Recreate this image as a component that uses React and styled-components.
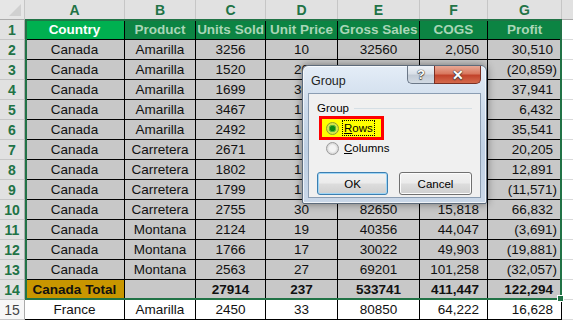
import React from "react";
import styled, { createGlobalStyle, css } from "styled-components";

// Page reset
const GlobalStyle = createGlobalStyle`
    body {
        margin: 0;
        background: #ffffff;
        overflow: hidden;
        font-family: "Liberation Sans", Arial, sans-serif;
    }
`;

// Sheet data
const columns = ["A", "B", "C", "D", "E", "F", "G"];
const headers = ["Country", "Product", "Units Sold", "Unit Price", "Gross Sales", "COGS", "Profit"];

const rows = [
    ["Canada", "Amarilla", 3256, 10, 32560, "2,050", "30,510"],
    ["Canada", "Amarilla", 1520, 20, 30400, "51,259", "(20,859)"],
    ["Canada", "Amarilla", 1699, 30, 50970, "13,029", "37,941"],
    ["Canada", "Amarilla", 3467, 15, 52005, "45,573", "6,432"],
    ["Canada", "Amarilla", 2492, 15, 37380, "1,839", "35,541"],
    ["Canada", "Carretera", 2671, 12, 32052, "11,847", "20,205"],
    ["Canada", "Carretera", 1802, 15, 27030, "14,139", "12,891"],
    ["Canada", "Carretera", 1799, 12, 21588, "33,159", "(11,571)"],
    ["Canada", "Carretera", 2755, 30, 82650, "15,818", "66,832"],
    ["Canada", "Montana", 2124, 19, 40356, "44,047", "(3,691)"],
    ["Canada", "Montana", 1766, 17, 30022, "49,903", "(19,881)"],
    ["Canada", "Montana", 2563, 27, 69201, "101,258", "(32,057)"],
];

const total = ["Canada Total", "", 27914, 237, 533741, "411,447", "122,294"];
const france = ["France", "Amarilla", 2450, 33, 80850, "64,222", "16,628"];

// Sheet styling
const Sheet = styled.div`
    position: relative;
    display: grid;
    grid-template-columns: 25px 100px 71px 70px 72px 82px 68px 74px 1fr;
    grid-auto-rows: 20px;
    width: 573px;
    height: 320px;
    overflow: hidden;
    font-size: 13.5px;
    color: #111;
`;

const Corner = styled.div`
    position: relative;
    background: #e6e6e6;
    border-right: 1px solid #c6c6c6;
    border-bottom: 1px solid #ababab;
    box-sizing: border-box;

    &::after {
        content: "";
        position: absolute;
        right: 3px;
        bottom: 3px;
        border-left: 12px solid transparent;
        border-bottom: 12px solid #d0d0d0;
    }
`;

const ColHead = styled.div`
    background: #e1e1e1;
    border-right: 1px solid #c6c6c6;
    border-bottom: 1px solid #ababab;
    box-sizing: border-box;
    color: #217346;
    font-weight: bold;
    font-size: 14px;
    display: flex;
    align-items: center;
    justify-content: center;
`;

const RowHead = styled.div`
    background: ${p => (p.$selected ? "#e1e1e1" : "#f7f7f7")};
    border-bottom: 1px solid #c6c6c6;
    border-right: 1px solid #ababab;
    box-sizing: border-box;
    color: ${p => (p.$selected ? "#217346" : "#444")};
    font-weight: ${p => (p.$selected ? "bold" : "normal")};
    font-size: 14px;
    display: flex;
    align-items: center;
    justify-content: center;
`;

const fills = {
    active: "#00b050",
    header: "#0c8443",
    data: "#c8c8c8",
    total: "#c89600",
    plain: "#ffffff",
};

const Cell = styled.div`
    background: ${p => fills[p.$fill]};
    border-right: 1px solid #000;
    border-bottom: 1px solid #000;
    box-sizing: border-box;
    display: flex;
    align-items: center;
    white-space: nowrap;
    overflow: hidden;
    justify-content: ${p => (p.$right ? "flex-end" : "center")};
    padding-right: ${p => (p.$right ? (p.$neg ? "4px" : "8px") : "0")};
    font-weight: ${p => (p.$bold ? "bold" : "normal")};
    ${p => p.$fill === "header" && css`color: #a9d6b7;`}
    ${p => p.$fill === "active" && css`color: #ffffff;`}
`;

const Blank = styled.div`
    border-bottom: 1px solid #dadada;
    background: ${p => (p.$head ? "#e1e1e1" : "#fff")};
    ${p => p.$head && css`border-bottom-color: #ababab;`}
`;

// Selection frame sits over the range A1:G14
const Selection = styled.div`
    position: absolute;
    left: 25px;
    top: 19px;
    width: 537px;
    height: 281px;
    border: 2px solid #217346;
    box-sizing: border-box;
    pointer-events: none;

    &::after {
        content: "";
        position: absolute;
        right: -4px;
        bottom: -4px;
        width: 5px;
        height: 5px;
        background: #217346;
        border: 1px solid #fff;
    }
`;

// Dialog styling
const Dialog = styled.div`
    position: absolute;
    left: 302px;
    top: 65px;
    width: 185px;
    height: 139px;
    box-sizing: border-box;
    border: 1px solid #5d6b7b;
    border-radius: 6px 6px 2px 2px;
    background: linear-gradient(180deg, #e4edf7 0%, #cddbeb 30%, #bfd0e4 60%, #c9d7e8 100%);
    box-shadow: 0 0 8px rgba(0, 0, 0, 0.45), inset 0 0 0 1px rgba(255, 255, 255, 0.7);
    display: flex;
    flex-direction: column;
    font-size: 11.5px;
    color: #000;
`;

const TitleBar = styled.div`
    height: 27px;
    display: flex;
    align-items: flex-start;
    justify-content: space-between;
    padding-left: 8px;
`;

const Title = styled.span`
    font-size: 12.5px;
    margin-top: 8px;
    color: #1e1e1e;
`;

const CaptionButtons = styled.div`
    display: flex;
    margin-right: 5px;
`;

const CaptionButton = styled.div`
    height: 18px;
    width: ${p => (p.$close ? "47px" : "27px")};
    box-sizing: border-box;
    display: flex;
    align-items: center;
    justify-content: center;
    font-weight: bold;
    font-size: ${p => (p.$close ? "14px" : "13px")};
    color: #fff;
    text-shadow: 0 0 1px #333, 0 0 1px #333, 0 1px 1px #444;
    border: 1px solid ${p => (p.$close ? "#7a3024" : "#6b7888")};
    border-top: none;
    ${p => p.$close
        ? css`
            background: linear-gradient(180deg, #e8a895 0%, #d9785f 45%, #c2432b 55%, #d46a4d 100%);
            border-radius: 0 0 5px 0;
        `
        : css`
            background: linear-gradient(180deg, #eef2f7 0%, #d9e0e8 45%, #c2cbd6 55%, #d2dae3 100%);
            border-right: none;
            border-radius: 0 0 0 5px;
        `}
`;

const Client = styled.div`
    flex: 1;
    margin: 0 5px 5px 5px;
    background: #f0f0f0;
    border: 1px solid #8b9db2;
    padding: 7px 8px 0 8px;
    display: flex;
    flex-direction: column;
`;

const GroupHeader = styled.div`
    display: flex;
    align-items: center;
    height: 14px;
    gap: 5px;

    &::after {
        content: "";
        flex: 1;
        height: 1px;
        background: #d5dfe5;
    }
`;

const Highlight = styled.div`
    margin: 1px 0 0 2px;
    width: 65px;
    height: 24px;
    box-sizing: border-box;
    border: 3px solid #ff0000;
    background: #ffff00;
    display: flex;
    align-items: center;
    padding-left: 4px;
    gap: 3px;
`;

const OptionRow = styled.div`
    display: flex;
    align-items: center;
    height: 16px;
    padding-left: 9px;
    gap: 5px;
`;

const Radio = styled.span`
    width: 11px;
    height: 11px;
    border-radius: 50%;
    border: 1px solid ${p => (p.$checked ? "#8c9c2c" : "#9a9a9a")};
    background: ${p => (p.$checked
        ? "radial-gradient(circle, #0d8a12 0 2.5px, #5ab53a 3px 3.5px, #d4e64a 4px)"
        : "radial-gradient(circle, #f4f4f4 0 3px, #dcdcdc 5px)")};
    flex-shrink: 0;
`;

const FocusLabel = styled.span`
    border: 1px dotted #000;
    padding: 0 1px;
    line-height: 14px;
`;

const Buttons = styled.div`
    display: flex;
    gap: 11px;
    margin-top: 16px;
`;

const Button = styled.div`
    width: ${p => (p.$default ? "72px" : "74px")};
    height: 23px;
    box-sizing: border-box;
    border-radius: 3px;
    border: 1px solid ${p => (p.$default ? "#3c7fb1" : "#707070")};
    background: linear-gradient(180deg, #f2f2f2 0%, #ebebeb 48%, #dddddd 52%, #cfcfcf 100%);
    box-shadow: ${p => (p.$default ? "inset 0 0 0 1px #9fd5f5" : "inset 0 0 0 1px #fcfcfc")};
    display: flex;
    align-items: center;
    justify-content: center;
`;

function cellFill(r, c) {
    if (r === 0) return c === 0 ? "active" : "header";
    if (r === 13) return c === 0 ? "total" : "data";
    if (r === 14) return "plain";
    return "data";
}

function SheetRow({ index, values }) {
    const selected = index <= 13;
    return (
        <>
            <RowHead $selected={selected}>{index + 1}</RowHead>
            {values.map((v, c) => {
                const right = index > 0 && c >= 5;
                const neg = typeof v === "string" && v.startsWith("(");
                return (
                    <Cell
                        key={c}
                        $fill={cellFill(index, c)}
                        $right={right}
                        $neg={neg}
                        $bold={index === 0 || index === 13}
                    >
                        {v}
                    </Cell>
                );
            })}
            <Blank />
        </>
    );
}

function GroupDialog() {
    return (
        <Dialog>
            <TitleBar>
                <Title>Group</Title>
                <CaptionButtons>
                    <CaptionButton>?</CaptionButton>
                    <CaptionButton $close>✕</CaptionButton>
                </CaptionButtons>
            </TitleBar>
            <Client>
                <GroupHeader>Group</GroupHeader>
                <Highlight>
                    <Radio $checked />
                    <FocusLabel><u>R</u>ows</FocusLabel>
                </Highlight>
                <OptionRow>
                    <Radio />
                    <span><u>C</u>olumns</span>
                </OptionRow>
                <Buttons>
                    <Button $default>OK</Button>
                    <Button>Cancel</Button>
                </Buttons>
            </Client>
        </Dialog>
    );
}

function App() {
    const allRows = [headers, ...rows, total, france];
    return (
        <>
            <GlobalStyle />
            <Sheet>
                <Corner />
                {columns.map(col => <ColHead key={col}>{col}</ColHead>)}
                <Blank $head />
                {allRows.map((values, i) => (
                    <SheetRow key={i} index={i} values={values} />
                ))}
                <Selection />
                <GroupDialog />
            </Sheet>
        </>
    );
}

export default App;
